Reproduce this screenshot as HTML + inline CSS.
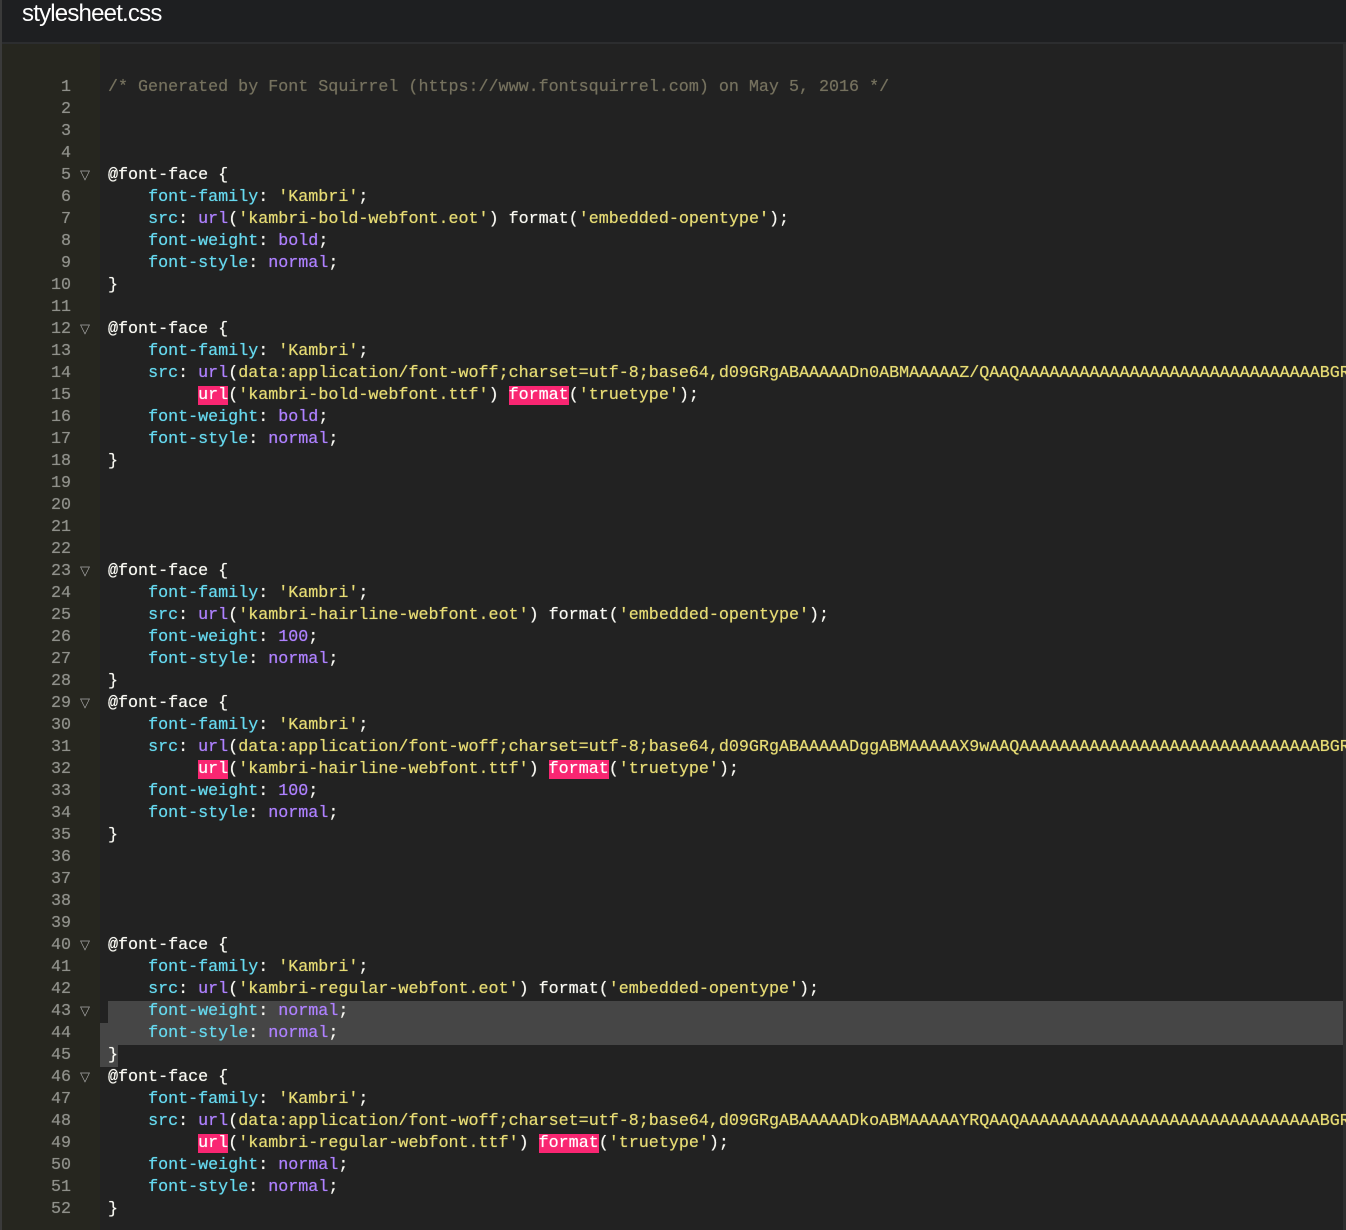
<!DOCTYPE html>
<html><head><meta charset="utf-8">
<style>
html,body{margin:0;padding:0;}
body{width:1346px;height:1230px;background:#222222;position:relative;overflow:hidden;font-family:"Liberation Mono",monospace;}
#hdr{position:absolute;left:0;top:0;width:1346px;height:42px;background:#1e1f21;border-bottom:2px solid #2c2d2f;}
#hdr span{position:absolute;left:22px;top:0px;font-family:"Liberation Sans",sans-serif;font-size:24px;color:#fff;letter-spacing:-0.8px;line-height:28px;}
#lb{position:absolute;left:0;top:0;width:2px;height:1230px;background:#3a3a3a;}
#rb{position:absolute;right:0;top:44px;width:3px;height:1186px;background:#2e2e2e;}
#gut{position:absolute;left:2px;top:44px;width:98px;height:1186px;background:#26261f;}
#code{position:absolute;left:0;top:77px;width:1343px;}
.l{height:22px;line-height:22px;font-size:16.7px;white-space:pre;position:relative;color:#f8f8f2;}
.t{text-shadow:0 0 0.6px currentColor;}
.n{position:absolute;left:0;width:71px;text-align:right;color:#8f908a;text-shadow:0 0 0.6px #8f908a;}
.f{position:absolute;left:80px;color:#a8a8a8;font-size:13px;}
.t{position:absolute;left:108px;}
.c{color:#75715e}.k{color:#66d9ef}.s{color:#e6db74}.p{color:#ae81ff}.r{background:#f92672;color:#fff}
.hl{position:absolute;top:0;height:22px;background:#464646;}
</style></head><body>
<div id="hdr"><span>stylesheet.css</span></div>
<div id="lb"></div>
<div id="gut"></div>
<div id="rb"></div>
<div id="code">
<div class="l"><span class="n">1</span><span class="t c">/* Generated by Font Squirrel (https://www.fontsquirrel.com) on May 5, 2016 */</span></div>
<div class="l"><span class="n">2</span></div>
<div class="l"><span class="n">3</span></div>
<div class="l"><span class="n">4</span></div>
<div class="l"><span class="n">5</span><span class="f">▽</span><span class="t">@font-face {</span></div>
<div class="l"><span class="n">6</span><span class="t">    <span class="k">font-family</span>: <span class="s">'Kambri'</span>;</span></div>
<div class="l"><span class="n">7</span><span class="t">    <span class="k">src</span>: <span class="p">url</span>(<span class="s">'kambri-bold-webfont.eot'</span>) format(<span class="s">'embedded-opentype'</span>);</span></div>
<div class="l"><span class="n">8</span><span class="t">    <span class="k">font-weight</span>: <span class="p">bold</span>;</span></div>
<div class="l"><span class="n">9</span><span class="t">    <span class="k">font-style</span>: <span class="p">normal</span>;</span></div>
<div class="l"><span class="n">10</span><span class="t">}</span></div>
<div class="l"><span class="n">11</span></div>
<div class="l"><span class="n">12</span><span class="f">▽</span><span class="t">@font-face {</span></div>
<div class="l"><span class="n">13</span><span class="t">    <span class="k">font-family</span>: <span class="s">'Kambri'</span>;</span></div>
<div class="l"><span class="n">14</span><span class="t">    <span class="k">src</span>: <span class="p">url</span>(<span class="s">data:application/font-woff;charset=utf-8;base64,d09GRgABAAAAADn0ABMAAAAAZ/QAAQAAAAAAAAAAAAAAAAAAAAAAAAAAAAAABGRlRg</span></span></div>
<div class="l"><span class="n">15</span><span class="t">         <span class="r">url</span>(<span class="s">'kambri-bold-webfont.ttf'</span>) <span class="r">format</span>(<span class="s">'truetype'</span>);</span></div>
<div class="l"><span class="n">16</span><span class="t">    <span class="k">font-weight</span>: <span class="p">bold</span>;</span></div>
<div class="l"><span class="n">17</span><span class="t">    <span class="k">font-style</span>: <span class="p">normal</span>;</span></div>
<div class="l"><span class="n">18</span><span class="t">}</span></div>
<div class="l"><span class="n">19</span></div>
<div class="l"><span class="n">20</span></div>
<div class="l"><span class="n">21</span></div>
<div class="l"><span class="n">22</span></div>
<div class="l"><span class="n">23</span><span class="f">▽</span><span class="t">@font-face {</span></div>
<div class="l"><span class="n">24</span><span class="t">    <span class="k">font-family</span>: <span class="s">'Kambri'</span>;</span></div>
<div class="l"><span class="n">25</span><span class="t">    <span class="k">src</span>: <span class="p">url</span>(<span class="s">'kambri-hairline-webfont.eot'</span>) format(<span class="s">'embedded-opentype'</span>);</span></div>
<div class="l"><span class="n">26</span><span class="t">    <span class="k">font-weight</span>: <span class="p">100</span>;</span></div>
<div class="l"><span class="n">27</span><span class="t">    <span class="k">font-style</span>: <span class="p">normal</span>;</span></div>
<div class="l"><span class="n">28</span><span class="t">}</span></div>
<div class="l"><span class="n">29</span><span class="f">▽</span><span class="t">@font-face {</span></div>
<div class="l"><span class="n">30</span><span class="t">    <span class="k">font-family</span>: <span class="s">'Kambri'</span>;</span></div>
<div class="l"><span class="n">31</span><span class="t">    <span class="k">src</span>: <span class="p">url</span>(<span class="s">data:application/font-woff;charset=utf-8;base64,d09GRgABAAAAADggABMAAAAAX9wAAQAAAAAAAAAAAAAAAAAAAAAAAAAAAAAABGRlRg</span></span></div>
<div class="l"><span class="n">32</span><span class="t">         <span class="r">url</span>(<span class="s">'kambri-hairline-webfont.ttf'</span>) <span class="r">format</span>(<span class="s">'truetype'</span>);</span></div>
<div class="l"><span class="n">33</span><span class="t">    <span class="k">font-weight</span>: <span class="p">100</span>;</span></div>
<div class="l"><span class="n">34</span><span class="t">    <span class="k">font-style</span>: <span class="p">normal</span>;</span></div>
<div class="l"><span class="n">35</span><span class="t">}</span></div>
<div class="l"><span class="n">36</span></div>
<div class="l"><span class="n">37</span></div>
<div class="l"><span class="n">38</span></div>
<div class="l"><span class="n">39</span></div>
<div class="l"><span class="n">40</span><span class="f">▽</span><span class="t">@font-face {</span></div>
<div class="l"><span class="n">41</span><span class="t">    <span class="k">font-family</span>: <span class="s">'Kambri'</span>;</span></div>
<div class="l"><span class="n">42</span><span class="t">    <span class="k">src</span>: <span class="p">url</span>(<span class="s">'kambri-regular-webfont.eot'</span>) format(<span class="s">'embedded-opentype'</span>);</span></div>
<div class="l"><div class="hl" style="left:108px;width:1235px"></div><span class="n">43</span><span class="f">▽</span><span class="t">    <span class="k">font-weight</span>: <span class="p">normal</span>;</span></div>
<div class="l"><div class="hl" style="left:100px;width:1243px"></div><span class="n">44</span><span class="t">    <span class="k">font-style</span>: <span class="p">normal</span>;</span></div>
<div class="l"><div class="hl" style="left:100px;width:18px"></div><span class="n">45</span><span class="t">}</span></div>
<div class="l"><span class="n">46</span><span class="f">▽</span><span class="t">@font-face {</span></div>
<div class="l"><span class="n">47</span><span class="t">    <span class="k">font-family</span>: <span class="s">'Kambri'</span>;</span></div>
<div class="l"><span class="n">48</span><span class="t">    <span class="k">src</span>: <span class="p">url</span>(<span class="s">data:application/font-woff;charset=utf-8;base64,d09GRgABAAAAADkoABMAAAAAYRQAAQAAAAAAAAAAAAAAAAAAAAAAAAAAAAAABGRlRg</span></span></div>
<div class="l"><span class="n">49</span><span class="t">         <span class="r">url</span>(<span class="s">'kambri-regular-webfont.ttf'</span>) <span class="r">format</span>(<span class="s">'truetype'</span>);</span></div>
<div class="l"><span class="n">50</span><span class="t">    <span class="k">font-weight</span>: <span class="p">normal</span>;</span></div>
<div class="l"><span class="n">51</span><span class="t">    <span class="k">font-style</span>: <span class="p">normal</span>;</span></div>
<div class="l"><span class="n">52</span><span class="t">}</span></div>
</div>
</body></html>
